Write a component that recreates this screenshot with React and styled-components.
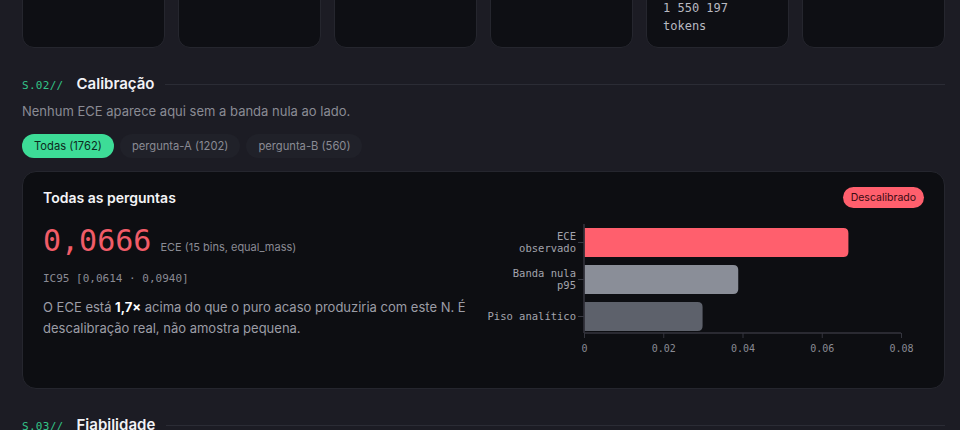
import React from "react";
import styled, { createGlobalStyle } from "styled-components";

const Global = createGlobalStyle`
  html, body { margin: 0; padding: 0; background: #1c1c24; }
  body { font-family: Inter, "Noto Sans", sans-serif; color: #e8e8ee; overflow: hidden; }
`;

const MONO = `"DejaVu Sans Mono", "Liberation Mono", monospace`;

const Page = styled.main`
  width: 923px;
  margin: -74px 0 0 22px;
`;

const StatRow = styled.div`
  display: grid;
  grid-template-columns: repeat(6, 1fr);
  gap: 13px;
`;

const StatCard = styled.div`
  background: #0e0f14;
  border: 1px solid #25262e;
  border-radius: 12px;
  padding: 16px 16px 12px;
  display: flex;
  flex-direction: column;
`;

const StatLabel = styled.div`
  font-family: ${MONO};
  font-size: 11px;
  line-height: 16px;
  color: #7d7e87;
  text-transform: uppercase;
`;

const StatValue = styled.div`
  margin-top: 8px;
  font-family: ${MONO};
  font-size: 20px;
  line-height: 26px;
  color: #e8e8ee;
`;

const StatNote = styled.div`
  margin-top: 6px;
  font-family: ${MONO};
  font-size: 12px;
  line-height: 18px;
  color: #b8b9c1;
`;

const Section = styled.section`
  margin-top: 26px;
`;

const SectionHead = styled.div`
  display: flex;
  align-items: center;
  height: 20px;
`;

const SectionCode = styled.span`
  font-family: ${MONO};
  font-size: 11px;
  letter-spacing: 0.3px;
  color: #33c488;
  margin-right: 13px;
  padding-top: 2px;
`;

const SectionTitle = styled.h2`
  margin: 0;
  font-size: 15px;
  line-height: 20px;
  font-weight: 600;
  color: #f2f2f6;
`;

const SectionRule = styled.div`
  flex: 1;
  height: 1px;
  background: #2b2c35;
  margin-left: 11px;
`;

const Subtitle = styled.p`
  margin: 7px 0 0;
  font-size: 13px;
  line-height: 20px;
  color: #8a8b94;
`;

const Tabs = styled.div`
  display: flex;
  gap: 6px;
  margin-top: 13px;
`;

const Tab = styled.button`
  height: 24px;
  padding: 0 12px;
  border: none;
  border-radius: 12px;
  font-family: Inter, sans-serif;
  font-size: 11.2px;
  line-height: 24px;
  background: ${(p) => (p.$active ? "#3ddc97" : "#202129")};
  color: ${(p) => (p.$active ? "#0d2a1d" : "#8a8b94")};
  cursor: pointer;
`;

const Card = styled.div`
  margin-top: 13px;
  background: #0d0e12;
  border: 1px solid #25262e;
  border-radius: 14px;
  padding: 15px 20px 26px;
`;

const CardHead = styled.div`
  display: flex;
  align-items: center;
  justify-content: space-between;
  height: 21px;
`;

const CardTitle = styled.h3`
  margin: 0;
  font-size: 14px;
  line-height: 20px;
  font-weight: 600;
  color: #f4f4f7;
`;

const Badge = styled.span`
  height: 21px;
  padding: 0 8px;
  border-radius: 11px;
  background: #ff5f6d;
  color: #3a0b12;
  font-size: 10.5px;
  line-height: 21px;
`;

const Body = styled.div`
  display: grid;
  grid-template-columns: 1fr 1fr;
  gap: 16px;
  margin-top: 14px;
`;

const Left = styled.div`
  padding-top: 1px;
`;

const BigRow = styled.div`
  display: flex;
  align-items: baseline;
  gap: 9px;
  height: 36px;
`;

const BigNum = styled.span`
  font-family: ${MONO};
  font-size: 30px;
  line-height: 36px;
  color: #f15c68;
`;

const BigUnit = styled.span`
  font-size: 11px;
  color: #8a8b94;
`;

const Interval = styled.div`
  margin-top: 12px;
  font-family: ${MONO};
  font-size: 11px;
  line-height: 16px;
  color: #8a8b94;
`;

const Para = styled.p`
  margin: 10px 0 0;
  font-size: 13px;
  line-height: 21px;
  color: #9c9da6;
  strong { color: #ffffff; font-weight: 700; }
`;

const ChartSvg = styled.svg`
  display: block;
  width: 432px;
  height: 140px;
  overflow: visible;
`;

const X0 = 92;
const SCALE = 317 / 0.08;
const bars = [
  { lines: ["ECE", "observado"], v: 0.0666, y: 6, color: "#ff5f6d" },
  { lines: ["Banda nula", "p95"], v: 0.0388, y: 43, color: "#8a8e98" },
  { lines: ["Piso analítico"], v: 0.0298, y: 80, color: "#5d616b" },
];
const ticks = [0, 0.02, 0.04, 0.06, 0.08];

function barPath(x, y, w, h, r) {
  return `M${x},${y} H${x + w - r} Q${x + w},${y} ${x + w},${y + r} V${y + h - r} Q${x + w},${y + h} ${x + w - r},${y + h} H${x} Z`;
}

function Chart() {
  const H = 29;
  return (
    <ChartSvg viewBox="0 0 432 140">
      {bars.map((b) => {
        const w = b.v * SCALE;
        const cy = b.y + H / 2;
        return (
          <g key={b.lines[0]}>
            <path d={barPath(X0 + 0.5, b.y, w, H, 5)} fill={b.color} />
            <line x1={X0 - 6} x2={X0} y1={cy} y2={cy} stroke="#3a3b44" strokeWidth="1" />
            <text
              x={X0 - 8}
              textAnchor="end"
              fontFamily="DejaVu Sans Mono, monospace"
              fontSize="10.5"
              fill="#a3a4ad"
            >
              {b.lines.map((l, i) => (
                <tspan
                  key={l}
                  x={X0 - 8}
                  y={cy + 3.5 + (b.lines.length === 2 ? (i === 0 ? -6 : 6) : 0)}
                >
                  {l}
                </tspan>
              ))}
            </text>
          </g>
        );
      })}
      <line x1={X0} x2={X0} y1={2} y2={111} stroke="#34353e" strokeWidth="1.5" />
      <line x1={X0} x2={X0 + 317} y1={111} y2={111} stroke="#34353e" strokeWidth="1.5" />
      {ticks.map((t) => {
        const x = X0 + 0.5 + t * SCALE;
        return (
          <g key={t}>
            <line x1={x} x2={x} y1={111} y2={116} stroke="#34353e" strokeWidth="1" />
            <text
              x={x}
              y={130}
              textAnchor="middle"
              fontFamily="DejaVu Sans Mono, monospace"
              fontSize="10"
              fill="#8a8b94"
            >
              {t === 0 ? "0" : t.toFixed(2)}
            </text>
          </g>
        );
      })}
    </ChartSvg>
  );
}

const stats = [
  { label: "Perguntas", value: "1762" },
  { label: "Modelos", value: "4" },
  { label: "Acurácia", value: "71,3%" },
  { label: "Brier", value: "0,192" },
  { label: "Custo", value: "US$ 4,12", note: ["1 550 197", "tokens"] },
  { label: "Duração", value: "38 min" },
];

export default function App() {
  return (
    <>
      <Global />
      <Page>
        <StatRow>
          {stats.map((s) => (
            <StatCard key={s.label}>
              <StatLabel>{s.label}</StatLabel>
              <StatValue>{s.value}</StatValue>
              {s.note && (
                <StatNote>
                  {s.note[0]}
                  <br />
                  {s.note[1]}
                </StatNote>
              )}
            </StatCard>
          ))}
        </StatRow>

        <Section>
          <SectionHead>
            <SectionCode>S.02//</SectionCode>
            <SectionTitle>Calibração</SectionTitle>
            <SectionRule />
          </SectionHead>
          <Subtitle>Nenhum ECE aparece aqui sem a banda nula ao lado.</Subtitle>
          <Tabs>
            <Tab $active>Todas (1762)</Tab>
            <Tab>pergunta-A (1202)</Tab>
            <Tab>pergunta-B (560)</Tab>
          </Tabs>
          <Card>
            <CardHead>
              <CardTitle>Todas as perguntas</CardTitle>
              <Badge>Descalibrado</Badge>
            </CardHead>
            <Body>
              <Left>
                <BigRow>
                  <BigNum>0,0666</BigNum>
                  <BigUnit>ECE (15 bins, equal_mass)</BigUnit>
                </BigRow>
                <Interval>IC95 [0,0614 · 0,0940]</Interval>
                <Para>
                  O ECE está <strong>1,7×</strong> acima do que o puro acaso produziria com
                  este N. É descalibração real, não amostra pequena.
                </Para>
              </Left>
              <Chart />
            </Body>
          </Card>
        </Section>

        <Section>
          <SectionHead>
            <SectionCode>S.03//</SectionCode>
            <SectionTitle>Fiabilidade</SectionTitle>
            <SectionRule />
          </SectionHead>
        </Section>
      </Page>
    </>
  );
}
